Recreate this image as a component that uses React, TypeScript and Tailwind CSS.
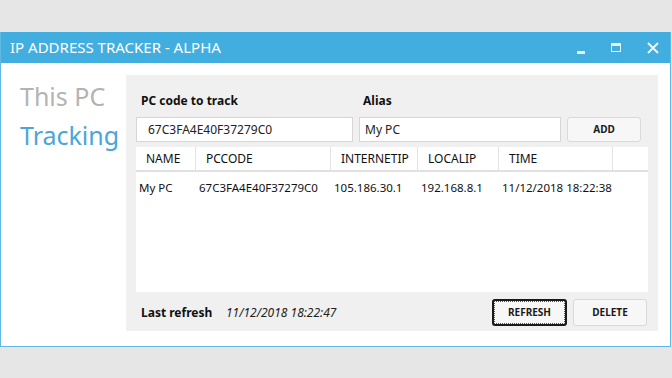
import React from "react";

const font = { fontFamily: '"Noto Sans", "Open Sans", sans-serif' };

function Btn({ label, focused }: { label: string; focused?: boolean }) {
  return (
    <div
      className={
        "flex h-full w-full items-center justify-center rounded-[3px] text-[10px] font-bold text-[#1a1a1a] " +
        (focused
          ? "border-2 border-[#1a1a1a] bg-[#f7f7f7]"
          : "border border-[#d9d9d9] bg-[#f7f7f7]")
      }
    >
      {focused ? (
        <div className="flex h-full w-full items-center justify-center border border-dotted border-[#555]">
          {label}
        </div>
      ) : (
        label
      )}
    </div>
  );
}

export default function App() {
  const cols = [
    { h: "NAME", w: 60, v: "My PC" },
    { h: "PCCODE", w: 135, v: "67C3FA4E40F37279C0" },
    { h: "INTERNETIP", w: 87, v: "105.186.30.1" },
    { h: "LOCALIP", w: 81, v: "192.168.8.1" },
    { h: "TIME", w: 114, v: "11/12/2018 18:22:38" },
    { h: "", w: 35, v: "" },
  ];
  return (
    <div className="h-[378px] w-[672px] bg-[#e6e6e6] pt-[32px]" style={font}>
      <div className="flex h-[315px] w-[671px] flex-col border-x border-b border-[#5fb9e4] bg-white">
        <div className="flex h-[31px] shrink-0 items-center bg-[#42aee0] pl-[9px] text-white">
          <div className="text-[15px]">IP ADDRESS TRACKER - ALPHA</div>
          <div className="ml-auto flex items-center">
            <div className="mr-[26px] mt-[9px] h-[3px] w-[8px] bg-[#e8f4fb]" />
            <div className="mr-[26px] h-[9px] w-[10px] border border-t-[3px] border-[#e8f4fb]" />
            <svg width="12" height="12" viewBox="0 0 12 12" className="mr-[11px]">
              <path d="M1 1 L11 11 M11 1 L1 11" stroke="#f2f9fd" strokeWidth="1.8" />
            </svg>
          </div>
        </div>
        <div className="flex flex-1 pt-[12px]">
          <div className="w-[125px] shrink-0 pl-[19px] pt-[4px]">
            <div className="text-[25px] leading-[34px] text-[#b3b3b3]">This PC</div>
            <div className="mt-[5px] text-[25px] leading-[34px] text-[#4aa6d8]">Tracking</div>
          </div>
          <div className="flex h-[256px] w-[532px] flex-col bg-[#f0f0f0] pl-[10px] pr-[10px]">
            <div className="flex h-[42px] items-end pb-[7px] text-[12px] font-bold text-[#111]">
              <div className="w-[223px] pl-[5px]">PC code to track</div>
              <div className="pl-[4px]">Alias</div>
            </div>
            <div className="flex h-[25px] gap-[6px]">
              <div className="flex w-[217px] items-center border border-[#d6d6d6] bg-white pl-[11px] text-[12px] text-[#222]">
                67C3FA4E40F37279C0
              </div>
              <div className="flex w-[202px] items-center border border-[#d6d6d6] bg-white pl-[5px] text-[12px] text-[#222]">
                My PC
              </div>
              <div className="h-[25px] w-[74px]">
                <Btn label="ADD" />
              </div>
            </div>
            <div className="mt-[5px] flex h-[145px] w-[512px] flex-col bg-white">
              <div className="flex h-[25px] border-b-2 border-[#e0e0e0]">
                {cols.map((c, i) => (
                  <div
                    key={i}
                    className={
                      "flex items-center pl-[10px] text-[12px] text-[#111] " +
                      (i < cols.length - 1 ? "border-r border-[#e3e3e3]" : "")
                    }
                    style={{ width: c.w }}
                  >
                    {c.h}
                  </div>
                ))}
              </div>
              <div className="flex h-[32px] items-center">
                {cols.map((c, i) => (
                  <div
                    key={i}
                    className="pl-[3px] text-[11.5px] text-[#111] whitespace-nowrap"
                    style={{ width: c.w }}
                  >
                    {c.v}
                  </div>
                ))}
              </div>
            </div>
            <div className="flex flex-1 items-center pt-[2px]">
              <div className="w-[90px] pl-[5px] text-[12px] font-bold text-[#111]">Last refresh</div>
              <div className="text-[12px] italic text-[#222]">11/12/2018 18:22:47</div>
              <div className="ml-auto mr-[1px] flex gap-[6px]">
                <div className="h-[27px] w-[75px]">
                  <Btn label="REFRESH" focused />
                </div>
                <div className="h-[27px] w-[74px]">
                  <Btn label="DELETE" />
                </div>
              </div>
            </div>
          </div>
        </div>
      </div>
    </div>
  );
}
